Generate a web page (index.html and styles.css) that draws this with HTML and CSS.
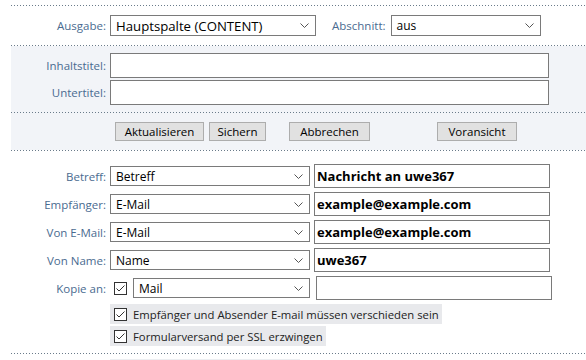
FILE: index.html
```html
<!DOCTYPE html>
<html lang="de">
<head>
    <meta charset="UTF-8">
    <meta name="viewport" content="width=device-width, initial-scale=1.0">
    <title>Formular</title>
    <link rel="stylesheet" href="styles.css">
</head>
<body>
    <div class="form">
        <div class="sep"></div>
        <div class="section top">
            <div class="row">
                <label class="label">Ausgabe:</label>
                <div class="select big w-main">
                    <span>Hauptspalte (CONTENT)</span>
                    <svg class="chev" width="9" height="5" viewBox="0 0 9 5"><path d="M0.5 0.5 L4.5 4.5 L8.5 0.5" fill="none" stroke="#555" stroke-width="1"/></svg>
                </div>
                <label class="label inline">Abschnitt:</label>
                <div class="select w-part">
                    <span>aus</span>
                    <svg class="chev" width="9" height="5" viewBox="0 0 9 5"><path d="M0.5 0.5 L4.5 4.5 L8.5 0.5" fill="none" stroke="#555" stroke-width="1"/></svg>
                </div>
            </div>
        </div>
        <div class="sep"></div>
        <div class="section grey">
            <div class="titles">
                <div class="row">
                    <label class="label">Inhaltstitel:</label>
                    <input type="text" class="text wide">
                </div>
                <div class="row">
                    <label class="label">Untertitel:</label>
                    <input type="text" class="text wide">
                </div>
            </div>
            <div class="sep"></div>
            <div class="buttons">
                <button class="btn b-update">Aktualisieren</button>
                <button class="btn b-save">Sichern</button>
                <button class="btn b-cancel">Abbrechen</button>
                <button class="btn b-preview">Voransicht</button>
            </div>
        </div>
        <div class="sep"></div>
        <div class="section mail">
            <div class="mrow">
                <label class="label">Betreff:</label>
                <div class="select w-field">
                    <span>Betreff</span>
                    <svg class="chev" width="9" height="5" viewBox="0 0 9 5"><path d="M0.5 0.5 L4.5 4.5 L8.5 0.5" fill="none" stroke="#555" stroke-width="1"/></svg>
                </div>
                <input type="text" class="text value" value="Nachricht an uwe367">
            </div>
            <div class="mrow">
                <label class="label">Empfänger:</label>
                <div class="select w-field">
                    <span>E-Mail</span>
                    <svg class="chev" width="9" height="5" viewBox="0 0 9 5"><path d="M0.5 0.5 L4.5 4.5 L8.5 0.5" fill="none" stroke="#555" stroke-width="1"/></svg>
                </div>
                <input type="text" class="text value" value="example@example.com">
            </div>
            <div class="mrow">
                <label class="label">Von E-Mail:</label>
                <div class="select w-field">
                    <span>E-Mail</span>
                    <svg class="chev" width="9" height="5" viewBox="0 0 9 5"><path d="M0.5 0.5 L4.5 4.5 L8.5 0.5" fill="none" stroke="#555" stroke-width="1"/></svg>
                </div>
                <input type="text" class="text value" value="example@example.com">
            </div>
            <div class="mrow">
                <label class="label">Von Name:</label>
                <div class="select w-field">
                    <span>Name</span>
                    <svg class="chev" width="9" height="5" viewBox="0 0 9 5"><path d="M0.5 0.5 L4.5 4.5 L8.5 0.5" fill="none" stroke="#555" stroke-width="1"/></svg>
                </div>
                <input type="text" class="text value" value="uwe367">
            </div>
            <div class="mrow">
                <label class="label">Kopie an:</label>
                <div class="copy">
                    <svg class="check" width="13" height="13" viewBox="0 0 13 13"><rect x="0.5" y="0.5" width="12" height="12" fill="#fff" stroke="#333"/><path d="M2.5 6.5 L5 9 L10.5 3.5" fill="none" stroke="#333" stroke-width="1"/></svg>
                    <div class="select w-copy">
                        <span>Mail</span>
                        <svg class="chev" width="9" height="5" viewBox="0 0 9 5"><path d="M0.5 0.5 L4.5 4.5 L8.5 0.5" fill="none" stroke="#555" stroke-width="1"/></svg>
                    </div>
                    <input type="text" class="text copyto">
                </div>
            </div>
            <div class="opts">
                <div class="opt">
                    <svg class="check" width="13" height="13" viewBox="0 0 13 13"><rect x="0.5" y="0.5" width="12" height="12" fill="#fff" stroke="#333"/><path d="M2.5 6.5 L5 9 L10.5 3.5" fill="none" stroke="#333" stroke-width="1"/></svg>
                    <span>Empfänger und Absender E-mail müssen verschieden sein</span>
                </div>
                <div class="opt">
                    <svg class="check" width="13" height="13" viewBox="0 0 13 13"><rect x="0.5" y="0.5" width="12" height="12" fill="#fff" stroke="#333"/><path d="M2.5 6.5 L5 9 L10.5 3.5" fill="none" stroke="#333" stroke-width="1"/></svg>
                    <span>Formularversand per SSL erzwingen</span>
                </div>
            </div>
        </div>
        <div class="sep"></div>
        <div class="section next">
            <div class="stub"></div>
            <div class="stub-box"></div>
        </div>
    </div>
</body>
</html>
```

FILE: styles.css
```css
*{
    box-sizing: border-box;
}
body{
    margin: 0;
    padding-top: 5px;
    font-family: "Open Sans", "Noto Sans", sans-serif;
    background: #fff;
    overflow: hidden;
}
.form{
    margin-left: 11px;
}
.sep{
    height: 1px;
    background: repeating-linear-gradient(to right, #6a7b8a 0 1px, transparent 1px 3px);
}
.label{
    width: 95px;
    margin-right: 4px;
    text-align: right;
    font-size: 11.5px;
    color: #4a6b90;
    flex: none;
}
.label.inline{
    width: auto;
    margin: 0 5px 0 16px;
}
.row{
    display: flex;
    align-items: center;
}
.section.top{
    height: 39px;
    padding-top: 9px;
}
.select{
    display: flex;
    align-items: center;
    justify-content: space-between;
    height: 21px;
    border: 1px solid #7a7a7a;
    background: #fff;
    padding: 0 6px 0 5px;
    font-size: 12px;
    color: #000;
    flex: none;
}
.select.big{
    font-size: 13.2px;
}
.w-main{
    width: 206px;
}
.w-part{
    width: 150px;
}
.w-field{
    width: 200px;
    height: 20px;
}
.w-copy{
    width: 177px;
    height: 20px;
}
.chev{
    flex: none;
}
.grey{
    background: #f2f4f8;
}
.titles{
    padding: 7px 0 7px;
    display: flex;
    flex-direction: column;
    gap: 2px;
}
.text{
    height: 25px;
    border: 1px solid #7a7a7a;
    background: #fff;
    outline: 0;
    margin: 0;
    font-family: inherit;
}
.wide{
    width: 439px;
}
.buttons{
    display: flex;
    padding: 9px 0 8px 104px;
    height: 37px;
}
.btn{
    height: 19px;
    padding: 0;
    border: 1px solid #adadad;
    background: #e1e1e1;
    font-family: inherit;
    font-size: 11.5px;
    color: #000;
    line-height: 17px;
}
.b-update{
    width: 89px;
}
.b-save{
    width: 57px;
    margin-left: 5px;
}
.b-cancel{
    width: 81px;
    margin-left: 23px;
}
.b-preview{
    width: 80px;
    margin-left: 67px;
}
.mail{
    padding: 11px 0 7px;
}
.mrow{
    display: flex;
    align-items: center;
    height: 28px;
}
.value{
    width: 236px;
    height: 24px;
    margin-left: 4px;
    padding: 0 2px;
    font-weight: bold;
    font-size: 13px;
    color: #000;
}
.copy{
    display: flex;
    align-items: center;
}
.check{
    flex: none;
    display: block;
}
.copy .check{
    margin: 0 6px 0 4px;
}
.copyto{
    width: 236px;
    height: 24px;
    margin-left: 6px;
}
.opts{
    display: flex;
    flex-direction: column;
    align-items: flex-start;
    gap: 2px;
    margin: 2px 0 0 99px;
}
.opt{
    display: flex;
    align-items: center;
    height: 20px;
    padding: 0 3px 0 4px;
    background: #e8e9ec;
    font-size: 11.3px;
    color: #222;
}
.opt .check{
    margin-right: 6px;
}
.next{
    position: relative;
    height: 20px;
}
.stub{
    margin: 5px 0 0 99px;
    width: 190px;
    height: 20px;
    background: #eceef1;
}
.stub-box{
    position: absolute;
    left: 455px;
    top: 7px;
    width: 140px;
    height: 20px;
    border: 1px solid #adadad;
    border-bottom: 0;
}
```
